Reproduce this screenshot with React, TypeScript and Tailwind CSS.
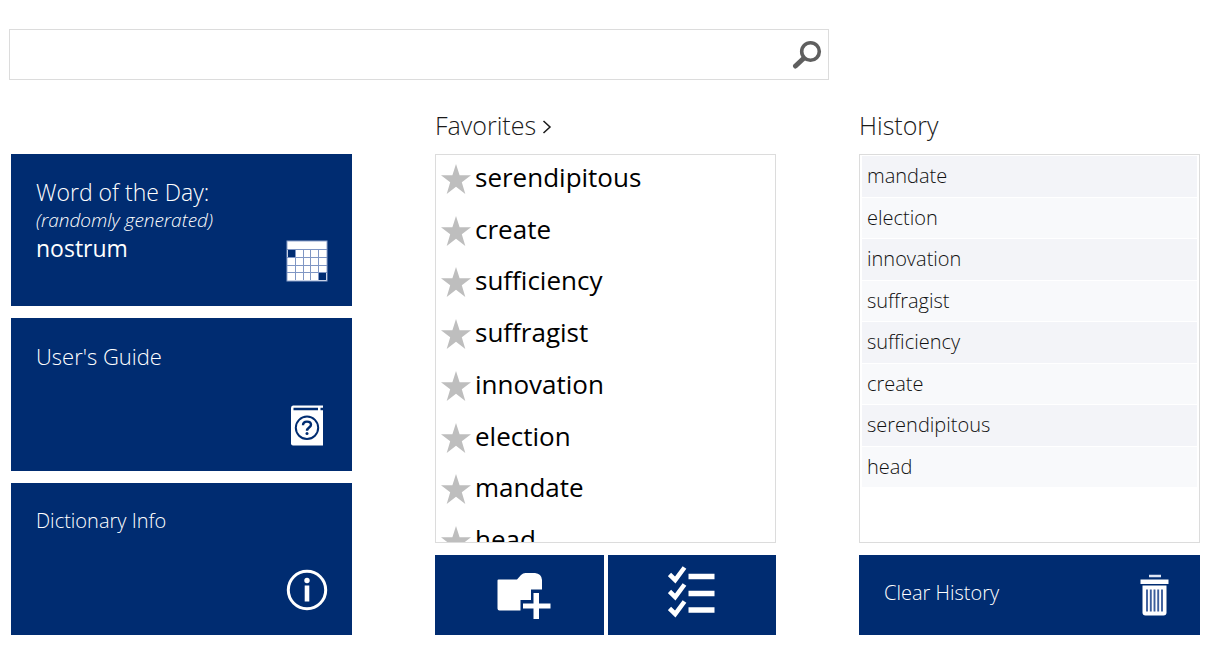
import type { ReactNode } from "react";

const favorites = [
  "serendipitous",
  "create",
  "sufficiency",
  "suffragist",
  "innovation",
  "election",
  "mandate",
  "head",
];

const history = [
  "mandate",
  "election",
  "innovation",
  "suffragist",
  "sufficiency",
  "create",
  "serendipitous",
  "head",
];

function SearchIcon() {
  return (
    <svg width="30" height="30" viewBox="0 0 30 30" fill="none" stroke="#5f5f5f" strokeLinecap="round" aria-hidden="true">
      <circle cx="18.5" cy="11.5" r="8.800" strokeWidth="3.600" />
      <path d="M11.500 18.500L3.500 26" strokeWidth="5" />
    </svg>
  );
}

function CalendarIcon() {
  return (
    <svg width="42" height="42" viewBox="0 0 42 42" aria-hidden="true">
      <rect x="1" y="1" width="40" height="40" fill="#fff" stroke="#8fa3cc" />
      <path d="M1 9.500H41M1 17.500H41M1 25.500H41M1 32.500H41M9.500 9V40M17.500 9V40M24.500 9V40M32.500 9V40" stroke="#7f96c4" fill="none" />
      <path d="M2 10h7v7H2zM33 33h7v7h-7z" fill="#002c71" />
    </svg>
  );
}

function BookIcon() {
  return (
    <svg width="42" height="42" viewBox="0 0 42 42" aria-hidden="true">
      <path d="M7 0.500H37V40.500H7Q5 40.500 5 38.500V3Q5 0.500 7 0.500Z" fill="#fff" />
      <path d="M7.500 4H32M34.500 4H37.500" stroke="#002c71" strokeWidth="2.400" />
      <circle cx="21" cy="22.800" r="11.200" fill="none" stroke="#002c71" strokeWidth="2" />
      <path d="M17 20.300C17 17.800 18.600 16.600 21 16.600C23.500 16.600 25 17.800 25 19.800C25 22.600 21 22.600 21 25.800" fill="none" stroke="#002c71" strokeWidth="2.400" />
      <circle cx="21" cy="28.500" r="1.500" fill="#002c71" />
    </svg>
  );
}

function InfoIcon() {
  return (
    <svg width="42" height="42" viewBox="0 0 42 42" aria-hidden="true">
      <circle cx="21" cy="21" r="18.700" fill="none" stroke="#fff" strokeWidth="3" />
      <circle cx="21" cy="11.500" r="2.700" fill="#fff" />
      <rect x="18.700" y="16.500" width="4.600" height="16" fill="#fff" />
    </svg>
  );
}

function StarIcon() {
  return (
    <svg width="30" height="30" viewBox="0 0 30 30" fill="#bebebe" aria-hidden="true">
      <path d="M15 0L18.600 11.300H30L20.800 18.300L24.300 30L15 22.800L5.700 30L9.200 18.300L0 11.300H11.400Z" />
    </svg>
  );
}

function FolderAddIcon() {
  return (
    <svg width="64" height="52" viewBox="-8 -3 64 52" fill="#fff" aria-hidden="true">
      <path d="M3.500 7.500H22L26 3Q28 1 30.500 1H40Q46.500 1.500 47 8V17.500H36V28H25.500V38.500H4.500Q2.500 38.500 2.500 36.500V8.500Q2.500 7.500 3.500 7.500Z" />
      <path d="M38.500 21H44V31.500H55.500V36.500H44V47H38.500V36.500H28V31.500H38.500Z" />
    </svg>
  );
}

function ChecklistIcon() {
  return (
    <svg width="48" height="60" viewBox="0 0 48 60" fill="none" stroke="#fff" aria-hidden="true">
      <path d="M1.500 9.500L7.200 15L16.500 2.500M1.500 26.500L7.200 32L16.500 19.500M1.500 43.500L7.200 49L16.500 36.500" strokeWidth="4.600" />
      <path d="M20.500 11.500H46.500M20.500 28.500H46.500M20.500 45H46.500" strokeWidth="5.500" />
    </svg>
  );
}

function TrashIcon() {
  return (
    <svg width="30" height="42" viewBox="0 0 30 42" aria-hidden="true">
      <path d="M9 2H21" stroke="#dfe6f4" strokeWidth="2.500" />
      <path d="M0.500 5.500H28.500V10H0.500Z" fill="#fff" />
      <path d="M2.500 11.500H26.500V38.500Q26.500 41.500 23.500 41.500H5.500Q2.500 41.500 2.500 38.500Z" fill="#fff" />
      <path d="M7 15.500V37.500M10.800 15.500V37.500M14.500 15.500V37.500M18.200 15.500V37.500M22 15.500V37.500" stroke="#3d5f9c" strokeWidth="1.900" />
    </svg>
  );
}

function Tile({ icon, children }: { icon: ReactNode; children: ReactNode }) {
  return (
    <button
      type="button"
      className="flex min-h-0 flex-1 cursor-pointer items-end justify-between bg-[#002c71] py-6 pr-6 pl-[25px] text-left text-white"
    >
      <span className="flex flex-col self-start">{children}</span>
      {icon}
    </button>
  );
}

export default function App() {
  return (
    <div className="min-h-screen bg-white pt-[29px] pb-[10px] font-['Open_Sans','Noto_Sans',sans-serif] font-light text-black">
      <form role="search" className="px-[9px]" onSubmit={(e) => e.preventDefault()}>
        <div className="flex h-[51px] w-full max-w-[820px] items-center border border-[#dcdcdc] pr-1.5">
          <input
            type="search"
            aria-label="Search the dictionary"
            className="h-full min-w-0 flex-1 px-3 text-xl outline-none"
          />
          <button type="submit" aria-label="Search" className="cursor-pointer">
            <SearchIcon />
          </button>
        </div>
      </form>

      <main className="grid grid-cols-3 gap-x-[83px] pt-[26px] pr-3 pl-[11px]">
        <section aria-label="Dictionary" className="flex flex-col gap-3 pt-12">
          <Tile icon={<CalendarIcon />}>
            <span className="text-[23px] leading-7">Word of the Day:</span>
            <span className="text-[19px] leading-7 italic">(randomly generated)</span>
            <span className="text-[23px] leading-7 font-normal">nostrum</span>
          </Tile>
          <Tile icon={<BookIcon />}>
            <span className="text-[22px] leading-7">User&apos;s Guide</span>
          </Tile>
          <Tile icon={<InfoIcon />}>
            <span className="text-xl leading-7">Dictionary Info</span>
          </Tile>
        </section>

        <section aria-labelledby="favorites-title" className="flex flex-col">
          <h2 id="favorites-title" className="h-12 text-[25px] leading-[38px] text-[#1a1a1a]">
            <a href="#favorites" className="flex items-center gap-1.5">
              Favorites
              <svg width="10" height="14" viewBox="0 0 10 14" fill="none" stroke="#1a1a1a" strokeWidth="1.500" className="mt-1" aria-hidden="true">
                <path d="M1.500 1L8 7L1.500 13" />
              </svg>
            </a>
          </h2>
          <div className="h-[389px] overflow-y-auto border border-[#dcdcdc] pl-[5px] [scrollbar-width:none]">
            <ul id="favorites" className="grid h-[414px] grid-rows-8">
              {favorites.map((word) => (
                <li key={word} className="flex items-center gap-1 pb-1 text-[26px] leading-9 font-normal">
                  <StarIcon />
                  <span className="pb-1">{word}</span>
                </li>
              ))}
            </ul>
          </div>
          <div className="mt-3 grid h-20 grid-cols-2 gap-1">
            <button type="button" aria-label="New folder" className="flex cursor-pointer items-center justify-center bg-[#002c71]">
              <FolderAddIcon />
            </button>
            <button type="button" aria-label="Select items" className="flex cursor-pointer items-center justify-center bg-[#002c71]">
              <ChecklistIcon />
            </button>
          </div>
        </section>

        <section aria-labelledby="history-title" className="flex flex-col">
          <h2 id="history-title" className="h-12 text-[25px] leading-[38px] text-[#1a1a1a]">
            History
          </h2>
          <div className="h-[389px] border border-[#dcdcdc] px-0.5 pt-px">
            <ul className="grid h-[331px] grid-rows-8 gap-px">
              {history.map((word) => (
                <li key={word} className="flex items-center bg-[#f8f9fb] px-[5px] text-xl text-[#111111] odd:bg-[#f3f4f8]">
                  {word}
                </li>
              ))}
            </ul>
          </div>
          <button
            type="button"
            className="mt-3 flex h-20 cursor-pointer items-center justify-between bg-[#002c71] pr-[30px] pl-[25px] text-xl text-white"
          >
            <span className="pb-1">Clear History</span>
            <TrashIcon />
          </button>
        </section>
      </main>
    </div>
  );
}
